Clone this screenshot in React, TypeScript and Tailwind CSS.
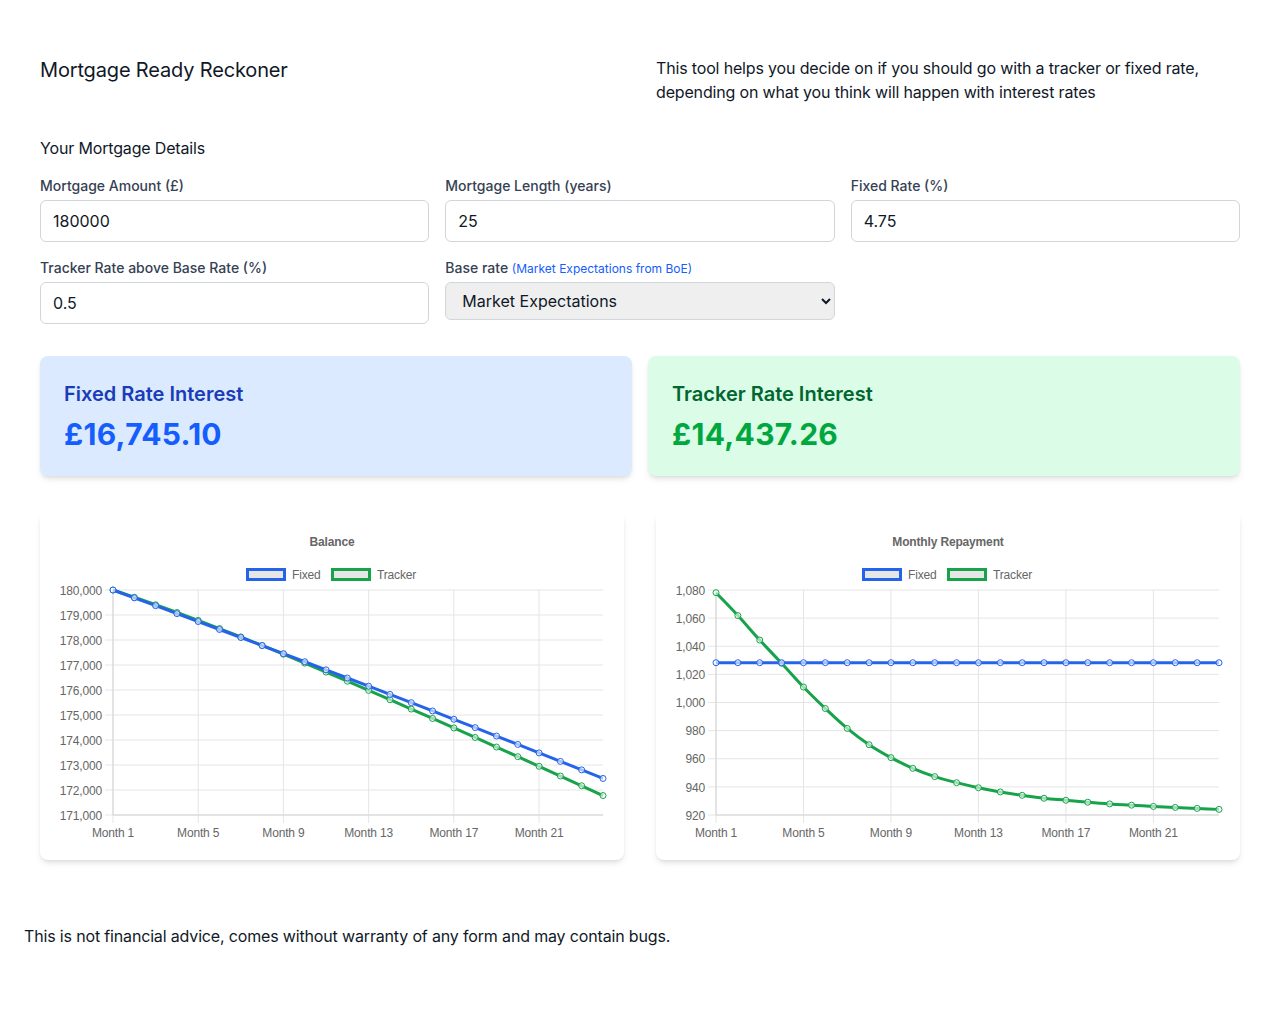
import React from 'react';

type Dataset = { label: string; color: string; data: number[] };

const TERM = 300;
const AMOUNT = 180000;
const FIXED = 4.75;

// tracker repayments implied by the BoE market expectations curve
const trackerPayments = [
    1078.1, 1061.8, 1044.4, 1027.9, 1011.0, 995.7, 981.6, 970.0, 960.8, 953.2, 947.3, 943.0,
    939.4, 936.4, 934.0, 931.9, 930.5, 929.1, 927.9, 927.0, 926.1, 925.4, 924.7, 924.0,
];

const annuity = (bal: number, annual: number, n: number) => {
    const r = annual / 1200;
    return (bal * r) / (1 - Math.pow(1 + r, -n));
};

// find the annual rate that gives this payment
const solveRate = (bal: number, pay: number, n: number) => {
    let lo = 0.01;
    let hi = 20;
    for (let i = 0; i < 60; i++) {
        const mid = (lo + hi) / 2;
        if (annuity(bal, mid, n) > pay) hi = mid;
        else lo = mid;
    }
    return (lo + hi) / 2;
};

const buildSeries = () => {
    const fixedPay: number[] = [];
    const fixedBal: number[] = [];
    const trackerBal: number[] = [];
    let fb = AMOUNT;
    let tb = AMOUNT;
    const fp = annuity(AMOUNT, FIXED, TERM);
    trackerPayments.forEach((tp, i) => {
        fixedBal.push(fb);
        fixedPay.push(1028.3);
        fb = fb * (1 + FIXED / 1200) - fp;

        const rate = solveRate(tb, tp, TERM - i);
        trackerBal.push(tb);
        tb = tb * (1 + rate / 1200) - tp;
    });
    return { fixedPay, fixedBal, trackerPay: trackerPayments, trackerBal };
};

const series = buildSeries();

const fmt = (n: number) => n.toLocaleString('en-GB');

// cardinal spline like chart.js tension
const smoothPath = (pts: [number, number][], t: number) => {
    if (t === 0) return 'M' + pts.map((p) => p.join(',')).join(' L');
    let d = `M${pts[0][0]},${pts[0][1]}`;
    const ctrl = pts.map((cur, i) => {
        const prev = pts[i - 1] || cur;
        const next = pts[i + 1] || cur;
        const d01 = Math.hypot(cur[0] - prev[0], cur[1] - prev[1]);
        const d12 = Math.hypot(next[0] - cur[0], next[1] - cur[1]);
        let s01 = d01 / (d01 + d12);
        let s12 = d12 / (d01 + d12);
        if (isNaN(s01)) s01 = 0;
        if (isNaN(s12)) s12 = 0;
        const fa = t * s01;
        const fb = t * s12;
        return {
            prev: [cur[0] - fa * (next[0] - prev[0]), cur[1] - fa * (next[1] - prev[1])],
            next: [cur[0] + fb * (next[0] - prev[0]), cur[1] + fb * (next[1] - prev[1])],
        };
    });
    for (let i = 1; i < pts.length; i++) {
        const c1 = ctrl[i - 1].next;
        const c2 = ctrl[i].prev;
        d += ` C${c1[0]},${c1[1]} ${c2[0]},${c2[1]} ${pts[i][0]},${pts[i][1]}`;
    }
    return d;
};

const LineChart = ({
    title,
    datasets,
    yMax,
    yMin,
    yStep,
    left,
    tension,
}: {
    title: string;
    datasets: Dataset[];
    yMax: number;
    yMin: number;
    yStep: number;
    left: number;
    tension: number;
}) => {
    const W = 584;
    const H = 348;
    const right = 563;
    const top = 78;
    const bottom = 303;
    const n = datasets[0].data.length;
    const xAt = (i: number) => left + ((right - left) * i) / (n - 1);
    const yAt = (v: number) => top + ((yMax - v) / (yMax - yMin)) * (bottom - top);
    const yTicks: number[] = [];
    for (let v = yMax; v >= yMin - 0.001; v -= yStep) yTicks.push(v);
    const xTicks = [0, 4, 8, 12, 16, 20];
    const font = "'Liberation Sans', Arial, sans-serif";

    return (
        <svg viewBox={`0 0 ${W} ${H}`} className="block w-full h-auto" style={{ fontFamily: font }}>
            <text x={292} y={31} textAnchor="middle" dominantBaseline="middle" fontSize={12} fontWeight="bold" fill="#666">
                {title}
            </text>

            {/* Legend */}
            <g fontSize={12} fill="#666">
                <rect x={207.5} y={57.5} width={37} height={10} fill="#e6e6e6" stroke={datasets[0].color} strokeWidth={3} />
                <text x={252} y={63.5} dominantBaseline="middle">{datasets[0].label}</text>
                <rect x={292.5} y={57.5} width={37} height={10} fill="#e6e6e6" stroke={datasets[1].color} strokeWidth={3} />
                <text x={337} y={63.5} dominantBaseline="middle">{datasets[1].label}</text>
            </g>

            {/* Grid */}
            {yTicks.map((v) => (
                <g key={v}>
                    <line x1={left - 8} x2={right} y1={yAt(v)} y2={yAt(v)} stroke="#e5e5e5" strokeWidth={1} />
                    <text x={left - 11} y={yAt(v) + 1.5} textAnchor="end" dominantBaseline="middle" fontSize={12} fill="#666">
                        {fmt(v)}
                    </text>
                </g>
            ))}
            {xTicks.map((i) => (
                <g key={i}>
                    <line x1={xAt(i)} x2={xAt(i)} y1={top} y2={bottom + 8} stroke="#e5e5e5" strokeWidth={1} />
                    <text x={xAt(i)} y={321.5} textAnchor="middle" dominantBaseline="middle" fontSize={12} fill="#666">
                        Month {i + 1}
                    </text>
                </g>
            ))}
            <line x1={left} x2={left} y1={top} y2={bottom} stroke="#d4d4d4" />
            <line x1={left} x2={right} y1={bottom} y2={bottom} stroke="#d4d4d4" />

            {/* Data: drawn last-to-first so the first dataset sits on top */}
            {[...datasets].reverse().map((ds) => {
                const pts = ds.data.map((v, i) => [xAt(i), yAt(v)] as [number, number]);
                return (
                    <g key={ds.label}>
                        <path d={smoothPath(pts, tension)} fill="none" stroke={ds.color} strokeWidth={3} strokeLinejoin="round" />
                        {pts.map((p, i) => (
                            <circle key={i} cx={p[0]} cy={p[1]} r={3} fill="rgba(255,255,255,0.6)" stroke={ds.color} strokeWidth={1} />
                        ))}
                    </g>
                );
            })}
        </svg>
    );
};

const Field = ({ label, value }: { label: string; value: string }) => (
    <div>
        <label className="block text-sm font-medium tracking-normal text-gray-700 mb-1">{label}</label>
        <input
            defaultValue={value}
            className="w-full rounded-md border border-gray-300 px-3 py-2 text-base tracking-normal text-gray-900"
        />
    </div>
);

export default function App() {
    const BLUE = '#2563eb';
    const GREEN = '#16a34a';
    return (
        <div
            className="min-h-screen bg-white text-gray-900 tracking-[-0.01em]"
            style={{ fontFamily: "Inter, 'Liberation Sans', sans-serif" }}
        >
            <div className="px-10 pt-14 pb-10">
                {/* Header */}
                <div className="grid grid-cols-2 gap-8 items-start">
                    <h1 className="text-xl">Mortgage Ready Reckoner</h1>
                    <p className="text-base leading-6">
                        This tool helps you decide on if you should go with a tracker or fixed rate, depending on what
                        you think will happen with interest rates
                    </p>
                </div>

                {/* Form */}
                <h2 className="mt-8 mb-4 text-base">Your Mortgage Details</h2>
                <div className="grid grid-cols-3 gap-4">
                    <Field label="Mortgage Amount (£)" value="180000" />
                    <Field label="Mortgage Length (years)" value="25" />
                    <Field label="Fixed Rate (%)" value="4.75" />
                    <Field label="Tracker Rate above Base Rate (%)" value="0.5" />
                    <div>
                        <label className="block text-sm font-medium tracking-normal text-gray-700 mb-1">
                            Base rate{' '}
                            <a href="#" className="text-xs font-normal text-blue-600">
                                (Market Expectations from BoE)
                            </a>
                        </label>
                        <select className="w-full h-[38px] rounded-md border border-gray-300 bg-[#efefef] px-3 text-base tracking-normal text-gray-900">
                            <option>Market Expectations</option>
                            <option>Flat</option>
                        </select>
                    </div>
                </div>

                {/* Results */}
                <div className="mt-8 grid grid-cols-2 gap-4">
                    <div className="rounded-lg bg-blue-100 p-6 shadow-md">
                        <h3 className="text-xl font-semibold tracking-normal text-blue-800">Fixed Rate Interest</h3>
                        <p className="mt-2 text-3xl font-bold tracking-[0.01em] text-blue-600">£16,745.10</p>
                    </div>
                    <div className="rounded-lg bg-green-100 p-6 shadow-md">
                        <h3 className="text-xl font-semibold tracking-normal text-green-800">Tracker Rate Interest</h3>
                        <p className="mt-2 text-3xl font-bold tracking-[0.01em] text-green-600">£14,437.26</p>
                    </div>
                </div>

                {/* Charts */}
                <div className="mt-9 grid grid-cols-2 gap-8">
                    <div className="rounded-lg bg-white shadow-md">
                        <LineChart
                            title="Balance"
                            left={73}
                            yMax={180000}
                            yMin={171000}
                            yStep={1000}
                            tension={0}
                            datasets={[
                                { label: 'Fixed', color: BLUE, data: series.fixedBal },
                                { label: 'Tracker', color: GREEN, data: series.trackerBal },
                            ]}
                        />
                    </div>
                    <div className="rounded-lg bg-white shadow-md">
                        <LineChart
                            title="Monthly Repayment"
                            left={60}
                            yMax={1080}
                            yMin={920}
                            yStep={20}
                            tension={0.4}
                            datasets={[
                                { label: 'Fixed', color: BLUE, data: series.fixedPay },
                                { label: 'Tracker', color: GREEN, data: series.trackerPay },
                            ]}
                        />
                    </div>
                </div>
            </div>

            <footer className="p-6">
                <p className="text-base">This is not financial advice, comes without warranty of any form and may contain bugs.</p>
            </footer>
        </div>
    );
}
